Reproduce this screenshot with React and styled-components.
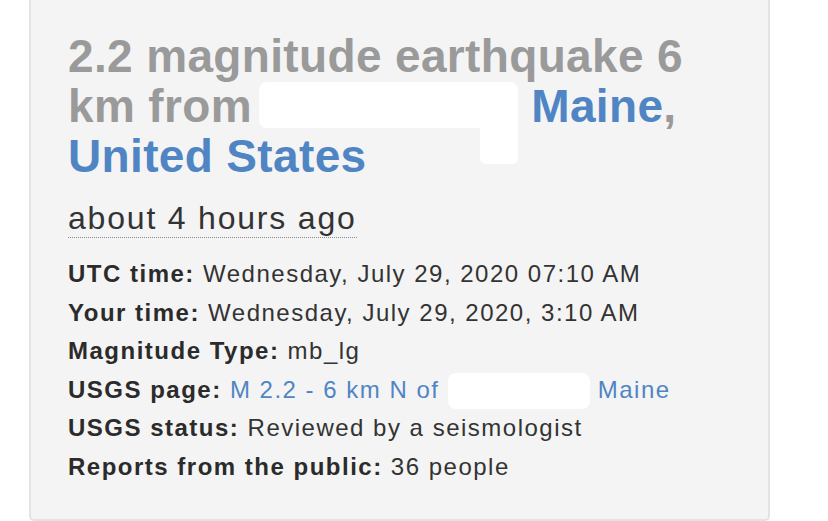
import React from "react";
import styled, { createGlobalStyle } from "styled-components";

const GlobalStyle = createGlobalStyle`
  html, body {
    margin: 0;
    padding: 0;
    background: #fff;
  }
  body {
    font-family: "Liberation Sans", Arial, sans-serif;
    color: #333;
  }
`;

const Page = styled.div`
  height: 521px;
  padding-left: 29px;
  box-sizing: border-box;
  overflow: hidden;
`;

const Card = styled.section`
  width: 741px;
  height: 521px;
  box-sizing: border-box;
  background: #f4f4f4;
  border: 2px solid #e3e3e3;
  border-top: none;
  border-radius: 0 0 5px 5px;
  padding: 31px 36px 0 37px;
`;

const Title = styled.h1`
  margin: 0;
  font-size: 46px;
  line-height: 50px;
  font-weight: 700;
  letter-spacing: 0.35px;
  color: #9a9a9a;
`;

const Place = styled.a`
  color: #5085c4;
  text-decoration: none;
`;

// white blob painted over the town name in the screenshot
const Redact = styled.span`
  position: relative;
  display: inline-block;
  width: ${(p) => p.$w}px;
  height: ${(p) => p.$h}px;
  margin-left: ${(p) => p.$ml || 0}px;
  margin-top: ${(p) => p.$mt || 0}px;
  vertical-align: top;
  background: #fff;
  border-radius: 8px;

  ${(p) =>
    p.$tail &&
    `
    &::after {
      content: "";
      position: absolute;
      right: 0;
      top: 30px;
      width: 38px;
      height: 52px;
      background: #fff;
      border-radius: 6px;
    }
  `}
`;

const Ago = styled.abbr`
  display: block;
  width: fit-content;
  margin-top: 18px;
  font-size: 32px;
  line-height: 38px;
  letter-spacing: 1.8px;
  color: #333;
  text-decoration: none;
  border-bottom: 1px dotted #8a8a8a;
`;

const Details = styled.ul`
  list-style: none;
  margin: 17px 0 0;
  padding: 0;
`;

const Row = styled.li`
  font-size: 24px;
  line-height: 38.6px;
  letter-spacing: 1.5px;
  color: #333;
  white-space: nowrap;
`;

const Label = styled.strong`
  font-weight: 700;
  color: #2b2b2b;
`;

const ValueLink = styled.a`
  color: #5085c4;
  text-decoration: none;
`;

const rows = [
  { label: "UTC time:", value: "Wednesday, July 29, 2020 07:10 AM" },
  { label: "Your time:", value: "Wednesday, July 29, 2020, 3:10 AM" },
  { label: "Magnitude Type:", value: "mb_lg" },
  { label: "USGS page:", link: true },
  { label: "USGS status:", value: "Reviewed by a seismologist" },
  { label: "Reports from the public:", value: "36 people" },
];

export default function App() {
  return (
    <>
      <GlobalStyle />
      <Page>
        <Card>
          <Title>
            2.2 magnitude earthquake 6 km from{" "}
            <Redact $w={259} $h={46} $ml={-6} $mt={1} $tail />{" "}
            <Place href="#">Maine</Place>, <Place href="#">United States</Place>
          </Title>
          <Ago title="2020-07-29 07:10 UTC">about 4 hours ago</Ago>
          <Details>
            {rows.map((r) => (
              <Row key={r.label}>
                <Label>{r.label}</Label>{" "}
                {r.link ? (
                  <ValueLink href="#">
                    M 2.2 - 6 km N of <Redact $w={142} $h={36} $mt={2} /> Maine
                  </ValueLink>
                ) : (
                  r.value
                )}
              </Row>
            ))}
          </Details>
        </Card>
      </Page>
    </>
  );
}
